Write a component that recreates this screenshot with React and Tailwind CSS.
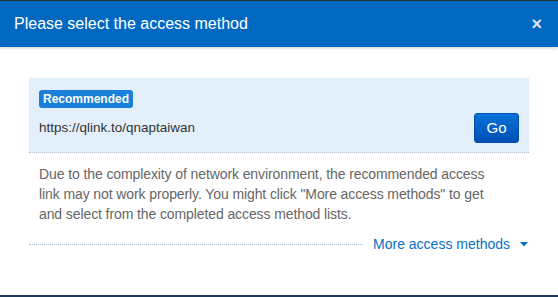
export default function App() {
  return (
    <div
      className="w-[558px] h-[297px] bg-white flex flex-col overflow-hidden"
      style={{ fontFamily: '"Liberation Sans", Arial, sans-serif' }}
    >
      {/* top edge */}
      <div className="h-[1px] bg-[#2a3038]" />

      {/* HEADER */}
      <div className="h-[46px] bg-[#0168c2] flex items-center justify-between pl-[14px] pr-[16px] shadow-[0_2px_2px_rgba(0,0,0,0.12)]">
        <h1 className="text-[16px] text-white leading-none">Please select the access method</h1>
        <span className="text-[#dbe6f2] text-[18px] font-bold leading-none">×</span>
      </div>

      {/* BODY */}
      <div className="flex-1 px-[29px] pt-[31px]">
        {/* RECOMMENDED */}
        <div className="bg-[#e3f0fc] border-b border-dotted border-[#b8c4cf] px-[10px] pt-[12px] pb-[9px]">
          <div className="w-fit bg-[#1a7fd9] text-white text-[12px] font-bold leading-[18px] px-[4px] rounded-[3px]">
            Recommended
          </div>
          <div className="flex items-center justify-between mt-[5px]">
            <span className="text-[13.5px] text-[#333]">https://qlink.to/qnaptaiwan</span>
            <button className="w-[45px] h-[30px] rounded-[3px] text-white text-[15px] bg-gradient-to-b from-[#0a72d8] to-[#004fb6] border border-[#0050b0]">
              Go
            </button>
          </div>
        </div>

        {/* NOTE */}
        <p className="text-[14px] leading-[20px] text-[#666] px-[10px] mt-[11px] tracking-[-0.1px]">
          Due to the complexity of network environment, the recommended access
          <br />
          link may not work properly. You might click "More access methods" to get
          <br />
          and select from the completed access method lists.
        </p>

        {/* MORE */}
        <div className="flex items-center mt-[10px] h-[20px]">
          <div className="flex-1 border-t border-dotted border-[#9ec3df]" />
          <span className="ml-[10px] text-[14px] text-[#0b6fc8]">More access methods</span>
          <svg width="8" height="5" viewBox="0 0 8 5" className="ml-[10px] mr-[1px]">
            <path d="M0 0 H8 L4 4.5 Z" fill="#0b6fc8" />
          </svg>
        </div>
      </div>

      {/* bottom edge */}
      <div className="h-[2px] bg-[#1c3854]" />
    </div>
  );
}
